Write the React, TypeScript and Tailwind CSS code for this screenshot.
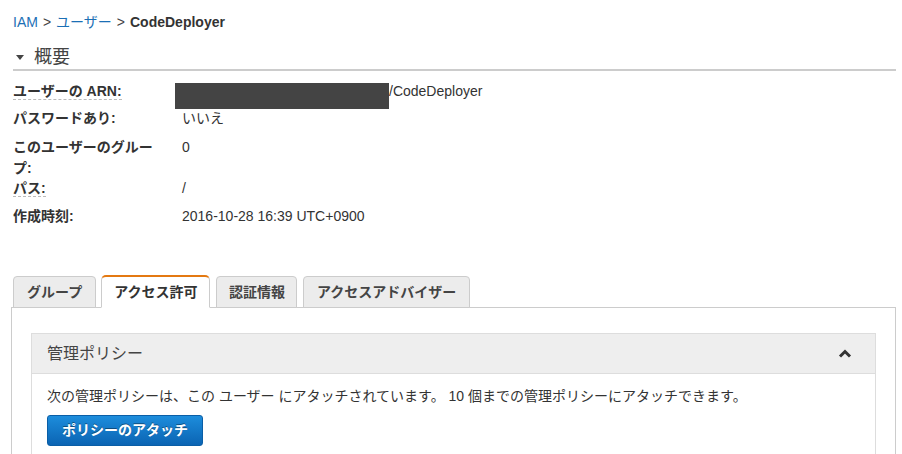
import React from "react";

const font = "font-['Liberation_Sans','Noto_Sans_CJK_JP',sans-serif]";

function Row({ label, value, dashed, cls, labelCls }: { label: React.ReactNode; value: React.ReactNode; dashed?: boolean; cls: string; labelCls?: string }) {
  return (
    <div className={`flex ${cls}`}>
      <div className={`w-[169px] pr-[20px] font-bold text-[14px] text-[#333] ${labelCls ?? "leading-[21px]"}`}>
        {dashed ? <span className="border-b border-dashed border-[#bbb]">{label}</span> : label}
      </div>
      <div className="text-[14px] leading-[21px] text-[#333]">{value}</div>
    </div>
  );
}

export default function App() {
  return (
    <div className={`${font} w-[902px] h-[454px] overflow-hidden bg-white text-[#333]`}>
      <div className="pl-[13px] pt-[13px] h-[31px] text-[14px] leading-[18px]">
        <span className="text-[#1b6fb5]">IAM</span>
        <span className="text-[#444] mx-[5px]">&gt;</span>
        <span className="text-[#1b6fb5]">ユーザー</span>
        <span className="text-[#444] mx-[5px]">&gt;</span>
        <span className="font-bold text-[#333]">CodeDeployer</span>
      </div>
      <div className="mt-[14px] ml-[13px] w-[883px] h-[26px] border-b-2 border-[#ccc] flex items-center">
        <div className="flex items-center h-[24px] gap-[10px]">
          <svg width="8" height="5" viewBox="0 0 8 5" className="ml-[3px]">
            <path d="M0 0 L8 0 L4 5 Z" fill="#444" />
          </svg>
          <span className="text-[18px] leading-[24px] text-[#444]">概要</span>
        </div>
      </div>
      <div className="pl-[13px]">
        <div className="relative">
          <Row
            cls="mt-[10px]"
            dashed
            label="ユーザーの ARN:"
            value={
              <span className="relative">
                <span className="inline-block w-[207px]"></span>
                /CodeDeployer
              </span>
            }
          />
          <div className="absolute left-[162px] top-[2px] w-[214px] h-[26px] bg-[#444]" />
        </div>
        <Row cls="mt-[6px]" label="パスワードあり:" value="いいえ" />
        <Row cls="mt-[8px]" labelCls="leading-[21px]" label="このユーザーのグループ:" value="0" />
        <Row cls="mt-[-1px]" dashed label="パス:" value="/" />
        <Row cls="mt-[7px]" label="作成時刻:" value="2016-10-28 16:39 UTC+0900" />
      </div>

      <div className="mt-[47px] ml-[11px] w-[885px]">
        <div className="flex items-end pl-[2px] h-[33px] relative z-10">
          <div className="h-[32px] -mb-px px-[13px] bg-[#ececec] border border-[#ccc] rounded-t-[4px] flex items-center text-[14px] font-bold text-[#444]">グループ</div>
          <div className="ml-[5px] h-[33px] -mb-px px-[12px] bg-white border border-[#ccc] border-t-2 border-t-[#e47911] border-b-white rounded-t-[5px] flex items-center text-[14px] font-bold text-[#333] pt-[1px]">アクセス許可</div>
          <div className="ml-[6px] h-[32px] -mb-px px-[11.5px] bg-[#ececec] border border-[#ccc] rounded-t-[4px] flex items-center text-[14px] font-bold text-[#444]">認証情報</div>
          <div className="ml-[6px] h-[32px] -mb-px px-[12.5px] bg-[#ececec] border border-[#ccc] rounded-t-[4px] flex items-center text-[14px] font-bold text-[#444]">アクセスアドバイザー</div>
        </div>
        <div className="border border-[#ccc] h-[200px] pt-[25px] pl-[19px] pr-[19px]">
          <div className="border border-[#ddd]">
            <div className="h-[40px] bg-[#eeeeee] border-b border-[#ddd] flex items-center justify-between pl-[15px] pr-[23px]">
              <span className="text-[16px] text-[#444]">管理ポリシー</span>
              <svg width="14" height="9" viewBox="0 0 14 9">
                <polyline points="2,7.5 7,2.5 12,7.5" fill="none" stroke="#333" strokeWidth="3" />
              </svg>
            </div>
            <div className="pl-[15px] pt-[12px] pb-[20px]">
              <div className="text-[14px] leading-[20px] text-[#333]">
                次の管理ポリシーは、この ユーザー にアタッチされています。 10 個までの管理ポリシーにアタッチできます。
              </div>
              <button className="mt-[9px] h-[31px] w-[156px] rounded-[3px] border border-[#0a5ea6] bg-gradient-to-b from-[#1d8ddc] to-[#0b64b3] text-white font-bold text-[14px] [text-shadow:0_-1px_0_rgba(0,0,0,0.4)] flex items-center justify-center">
                ポリシーのアタッチ
              </button>
            </div>
          </div>
        </div>
      </div>
    </div>
  );
}
